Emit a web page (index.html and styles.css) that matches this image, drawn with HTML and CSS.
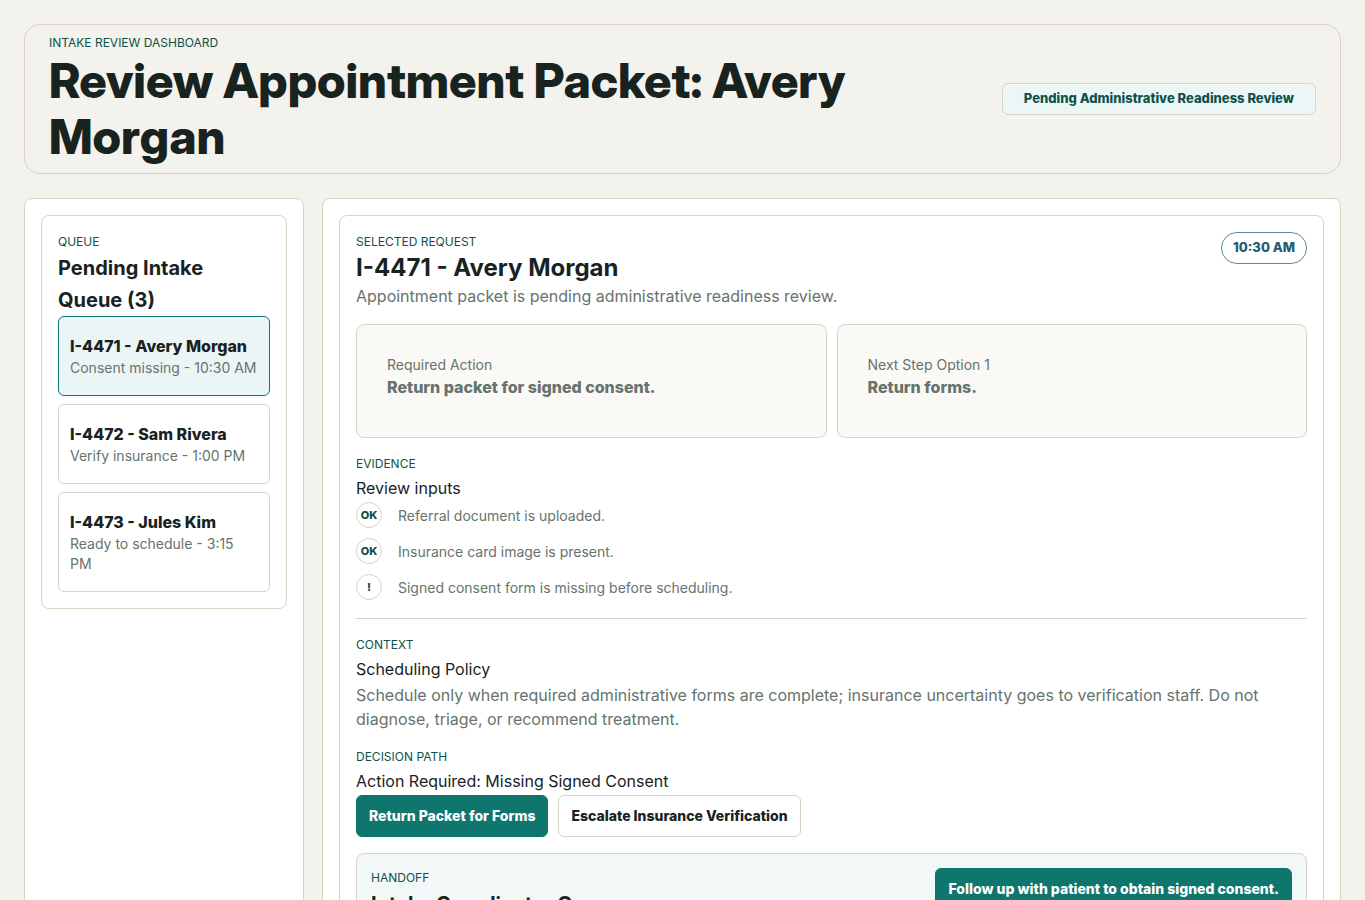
FILE: index.html
```html
<!DOCTYPE html>
<html lang="en">
<head>
<meta charset="utf-8">
<meta name="viewport" content="width=device-width, initial-scale=1">
<title>Intake Review Dashboard</title>
<link rel="stylesheet" href="styles.css">
</head>
<body>
<div class="page">
  <header class="masthead">
    <div>
      <p class="eyebrow">Intake Review Dashboard</p>
      <h1 class="masthead-title">Review Appointment Packet: Avery Morgan</h1>
    </div>
    <span class="status">Pending Administrative Readiness Review</span>
  </header>
  <div class="workspace">
    <aside class="panel">
      <section class="card">
        <p class="eyebrow">Queue</p>
        <h2 class="queue-title">Pending Intake Queue (3)</h2>
        <div class="queue">
          <button type="button" class="queue-item is-active"><strong>I-4471 - Avery Morgan</strong><span>Consent missing - 10:30 AM</span></button>
          <button type="button" class="queue-item"><strong>I-4472 - Sam Rivera</strong><span>Verify insurance - 1:00 PM</span></button>
          <button type="button" class="queue-item"><strong>I-4473 - Jules Kim</strong><span>Ready to schedule - 3:15 PM</span></button>
        </div>
      </section>
    </aside>
    <main class="panel">
      <article class="card request">
        <header class="request-head">
          <div>
            <p class="eyebrow">Selected Request</p>
            <h2 class="request-title">I-4471 - Avery Morgan</h2>
            <p class="copy">Appointment packet is pending administrative readiness review.</p>
          </div>
          <time class="pill" datetime="10:30">10:30 AM</time>
        </header>
        <div class="facts">
          <div class="fact"><span>Required Action</span><strong>Return packet for signed consent.</strong></div>
          <div class="fact"><span>Next Step Option 1</span><strong>Return forms.</strong></div>
        </div>
        <section class="evidence">
          <p class="eyebrow">Evidence</p>
          <h3 class="section-title">Review inputs</h3>
          <ul class="checks">
            <li><b class="mark">OK</b><span>Referral document is uploaded.</span></li>
            <li><b class="mark">OK</b><span>Insurance card image is present.</span></li>
            <li><b class="mark">!</b><span>Signed consent form is missing before scheduling.</span></li>
          </ul>
        </section>
        <section>
          <p class="eyebrow">Context</p>
          <h3 class="section-title">Scheduling Policy</h3>
          <p class="copy">Schedule only when required administrative forms are complete; insurance uncertainty goes to verification staff. Do not diagnose, triage, or recommend treatment.</p>
        </section>
        <section>
          <p class="eyebrow">Decision Path</p>
          <h3 class="section-title">Action Required: Missing Signed Consent</h3>
          <div class="actions">
            <button type="button" class="button button-primary">Return Packet for Forms</button>
            <button type="button" class="button">Escalate Insurance Verification</button>
          </div>
        </section>
        <section class="handoff">
          <div>
            <p class="eyebrow">Handoff</p>
            <h3 class="queue-title">Intake Coordinator Queue</h3>
          </div>
          <button type="button" class="button button-primary">Follow up with patient to obtain signed consent.</button>
        </section>
      </article>
    </main>
  </div>
</div>
</body>
</html>
```

FILE: styles.css
```css
:root {
  --ink: #18231f;
  --muted: #66736e;
  --line: #d8d3c5;
  --green: #0f766e;
  --deep: #0f514a;
  --canvas: #f4f2ec;
}

* { box-sizing: border-box; }

body {
  margin: 0;
  background: var(--canvas);
  color: var(--ink);
  font: 16px/24px Inter, "Liberation Sans", sans-serif;
}

h1, h2, h3, p, ul { margin: 0; }

strong { font-weight: 800; }

button { font: inherit; color: inherit; cursor: pointer; }

.page {
  display: grid;
  gap: 24px;
  padding: 24px;
}

.masthead {
  display: flex;
  align-items: center;
  justify-content: space-between;
  gap: 24px;
  padding: 8px 24px;
  border: 1px solid var(--line);
  border-radius: 16px;
}

.masthead-title {
  font-family: "Inter Display", Inter, "Liberation Sans", sans-serif;
  font-size: 48px;
  line-height: 56px;
  font-weight: 800;
}

.request-title { font-size: 24px; line-height: 32px; font-weight: 700; }

.eyebrow {
  color: var(--deep);
  font-size: 12px;
  line-height: 20px;
  text-transform: uppercase;
}

.status {
  flex: none;
  padding: 4px 21px 6px;
  border: 1px solid var(--line);
  border-radius: 6px;
  background: #edf6f7;
  color: var(--deep);
  font-size: 13px;
  line-height: 20px;
  font-weight: 800;
}

.workspace {
  display: grid;
  grid-template-columns: 280px minmax(0, 1fr);
  gap: 18px;
}

.panel {
  padding: 16px;
  border: 1px solid var(--line);
  border-radius: 8px;
  background: #fff;
}

.card {
  padding: 16px;
  border: 1px solid var(--line);
  border-radius: 8px;
}

.queue-title { font-size: 20px; line-height: 32px; font-weight: 700; }

.queue { display: grid; gap: 8px; }

.queue-item {
  display: grid;
  padding: 17px 11px;
  border: 1px solid var(--line);
  border-radius: 6px;
  background: #fff;
  text-align: left;
}

.queue-item.is-active { border-color: var(--green); background: #ecf5f6; }

.queue-item span,
.fact span,
.checks {
  color: var(--muted);
  font-size: 14px;
  line-height: 20px;
}

.request { display: grid; gap: 16px; }

.request-head {
  display: flex;
  align-items: flex-start;
  justify-content: space-between;
  gap: 16px;
}

.copy { color: var(--muted); }

.pill {
  flex: none;
  padding: 4px 11px 6px;
  border: 1px solid #5b8c98;
  border-radius: 16px;
  color: #245b73;
  font-size: 13px;
  line-height: 20px;
  font-weight: 800;
}

.facts {
  display: grid;
  grid-template-columns: 1fr 1fr;
  gap: 10px;
}

.fact {
  display: grid;
  padding: 30px 30px 38px;
  border: 1px solid var(--line);
  border-radius: 8px;
  background: #faf9f5;
  color: var(--muted);
}

.section-title { font-size: 16px; line-height: 28px; font-weight: 400; }

.evidence { padding-bottom: 16px; border-bottom: 1px solid var(--line); }

.checks {
  display: grid;
  gap: 8px;
  padding: 0;
  list-style: none;
}

.checks li { display: flex; gap: 16px; line-height: 28px; }

.mark {
  display: grid;
  place-items: center;
  width: 26px;
  height: 26px;
  border: 1px solid var(--line);
  border-radius: 50%;
  color: var(--deep);
  font-size: 11px;
  line-height: 16px;
  font-weight: 800;
}

.actions { display: flex; gap: 10px; }

.button {
  padding: 10px 12px;
  border: 1px solid var(--line);
  border-radius: 6px;
  background: #fff;
  font-size: 14px;
  line-height: 20px;
  font-weight: 800;
}

.button-primary {
  border-color: var(--green);
  background: var(--green);
  color: #fff;
}

.handoff {
  display: flex;
  align-items: flex-start;
  justify-content: space-between;
  gap: 16px;
  padding: 14px;
  border: 1px solid var(--line);
  border-radius: 8px;
  background: #f2f8f8;
}
```
